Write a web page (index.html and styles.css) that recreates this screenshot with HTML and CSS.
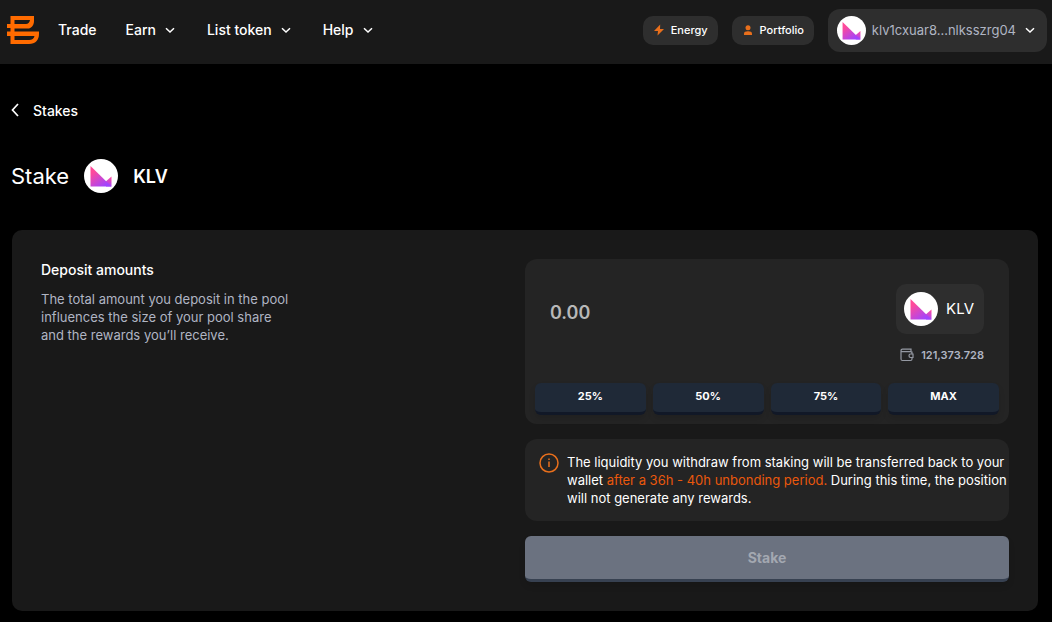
FILE: index.html
```html
<!DOCTYPE html>
<html lang="en">
<head>
    <meta charset="UTF-8">
    <meta name="viewport" content="width=device-width, initial-scale=1.0">
    <title>Stake KLV</title>
    <link rel="stylesheet" href="styles.css">
</head>
<body>
    <!-- shared icons -->
    <svg class="sprite" aria-hidden="true">
        <defs>
            <linearGradient id="klv-gradient" gradientUnits="userSpaceOnUse" x1="9" y1="13" x2="20" y2="28">
                <stop offset="0" stop-color="#ff4a9a"/>
                <stop offset="1" stop-color="#a044ff"/>
            </linearGradient>
            <linearGradient id="klv-tip" gradientUnits="userSpaceOnUse" x1="27" y1="18" x2="24" y2="28">
                <stop offset="0" stop-color="#ff4a9d"/>
                <stop offset="1" stop-color="#a044ff"/>
            </linearGradient>
        </defs>
        <symbol id="klv" viewBox="0 0 34 34">
            <circle cx="17" cy="17" r="17" fill="#fff"/>
            <path d="M22 22.300L27.500 17.500V27.500H22Z" fill="url(#klv-tip)"/>
            <path d="M6.500 7L27.500 27.500H6.500Z" fill="url(#klv-gradient)"/>
        </symbol>
        <symbol id="chevron" viewBox="0 0 16 16">
            <path d="M4 6.200L8 10L12 6.200" fill="none" stroke="#fff" stroke-width="1.500"/>
        </symbol>
    </svg>

    <header class="header">
        <a href="#" class="logo" aria-label="Home">
            <svg width="32" height="28" viewBox="0 0 32 28">
                <path fill="#ff6b00" fill-rule="evenodd" d="M3.500 0H27V5C27 8 25.500 11.500 22 12.500H7.500V15.500H32V18C32 24 28.500 28 22 28H3.500V20H0V15.500H3.500V12H0V8H3.500Z M7.500 4V8H19C21 8 22.500 6.500 23 4Z M7.500 20V24H22C25 24 27 22.500 27.500 20Z"/>
            </svg>
        </a>
        <nav class="nav">
            <a href="#">Trade</a>
            <a href="#">Earn <svg class="chevron"><use href="#chevron"/></svg></a>
            <a href="#">List token <svg class="chevron"><use href="#chevron"/></svg></a>
            <a href="#">Help <svg class="chevron"><use href="#chevron"/></svg></a>
        </nav>
        <div class="header-actions">
            <button class="pill">
                <svg width="12" height="12" viewBox="0 0 12 12"><path d="M7.200 0.500L1 7H5L4.500 11.500L11 5H7Z" fill="#e86f1c"/></svg>
                Energy
            </button>
            <button class="pill">
                <svg width="12" height="12" viewBox="0 0 12 12"><circle cx="6" cy="3.800" r="2.500" fill="#e86f1c"/><path d="M2 11V9.500C2 8 3.500 7.200 6 7.200S10 8 10 9.500V11Z" fill="#e86f1c"/></svg>
                Portfolio
            </button>
            <button class="account">
                <svg class="account-avatar"><use href="#klv"/></svg>
                klv1cxuar8...nlksszrg04
                <svg class="chevron"><use href="#chevron"/></svg>
            </button>
        </div>
    </header>

    <main>
        <a href="#" class="back-link">
            <svg width="8" height="14" viewBox="0 0 8 14"><path d="M7 1L1.500 7L7 13" fill="none" stroke="#fff" stroke-width="1.700"/></svg>
            Stakes
        </a>

        <div class="title">
            <h1>Stake</h1>
            <svg class="token-icon"><use href="#klv"/></svg>
            <h2>KLV</h2>
        </div>

        <section class="stake-card">
            <div class="stake-info">
                <h3><label for="amount">Deposit amounts</label></h3>
                <p>The total amount you deposit in the pool influences the size of your pool share and the rewards you’ll receive.</p>
            </div>

            <form class="stake-form">
                <div class="amount-box">
                    <div class="amount-row">
                        <input type="text" id="amount" class="amount-input" placeholder="0.00">
                        <div class="amount-token">
                            <div class="token">
                                <svg class="token-icon"><use href="#klv"/></svg>
                                KLV
                            </div>
                            <div class="balance">
                                <svg width="14" height="14" viewBox="0 0 14 14" fill="none" stroke="#9599a3" stroke-width="1.200">
                                    <path d="M12 5V3.500M12 10V11C12 12 11.500 12.500 10.500 12.500H2.500C1.500 12.500 1 12 1 11V3C1 1.500 1.700 1.200 2.500 1.200H11V3.700M1 3.700H10.500C11.500 3.700 12 4.200 12 5V6"/>
                                    <path d="M13 6H10.500C8.500 6 8.500 9.500 10.500 9.500H13Z"/>
                                </svg>
                                121,373.728
                            </div>
                        </div>
                    </div>
                    <div class="percent-row">
                        <button type="button" class="percent-button">25%</button>
                        <button type="button" class="percent-button">50%</button>
                        <button type="button" class="percent-button">75%</button>
                        <button type="button" class="percent-button">MAX</button>
                    </div>
                </div>

                <div class="notice">
                    <svg width="20" height="20" viewBox="0 0 20 20">
                        <circle cx="10" cy="10" r="9" fill="none" stroke="#e86f1c" stroke-width="1.500"/>
                        <path d="M10 8.500V14M10 5.500V7" stroke="#e86f1c" stroke-width="1.500"/>
                    </svg>
                    <p>The liquidity you withdraw from staking will be transferred back to your wallet <span>after a 36h - 40h unbonding period.</span> During this time, the position will not generate any rewards.</p>
                </div>

                <button type="submit" class="stake-button" disabled>Stake</button>
            </form>
        </section>
    </main>
</body>
</html>
```

FILE: styles.css
```css
* {
    margin: 0;
    padding: 0;
    box-sizing: border-box;
}

body {
    font-family: Inter, sans-serif;
    background-color: #000;
    color: #fff;
}

a {
    color: inherit;
    text-decoration: none;
}

button,
input {
    font-family: inherit;
    border: none;
}

button {
    color: #fff;
    cursor: pointer;
}

svg {
    flex-shrink: 0;
}

.sprite {
    position: absolute;
    width: 0;
    height: 0;
}

.chevron {
    width: 16px;
    height: 16px;
}

.token-icon {
    width: 34px;
    height: 34px;
}

/* Header */
.header {
    display: flex;
    align-items: center;
    height: 64px;
    padding: 0 5px 4px 7px;
    background-color: #191919;
}

.logo {
    display: flex;
}

.nav {
    display: flex;
    gap: 29px;
    margin-left: 19px;
    font-size: 14px;
    font-weight: 500;
    line-height: 18px;
}

.nav a {
    display: flex;
    align-items: center;
    gap: 6px;
}

.header-actions {
    display: flex;
    align-items: center;
    gap: 14px;
    margin-left: auto;
}

.pill {
    display: flex;
    align-items: center;
    gap: 6px;
    height: 29px;
    padding: 0 10px;
    border-radius: 10px;
    background-color: #2e2e2e;
    font-size: 11px;
    font-weight: 500;
}

.account {
    display: flex;
    align-items: center;
    gap: 6px;
    height: 43px;
    padding: 0 9px;
    border-radius: 12px;
    background-color: #2e2e2e;
    color: #b0b5c3;
    font-size: 13px;
}

.account-avatar {
    width: 29px;
    height: 29px;
}

/* Page */
main {
    padding: 36px 14px 12px 11px;
}

.back-link {
    display: inline-flex;
    align-items: center;
    gap: 14px;
    height: 20px;
    font-size: 14px;
    font-weight: 500;
}

.title {
    display: flex;
    align-items: center;
    gap: 15px;
    margin: 38px 0 37px;
}

.title h1 {
    font-size: 22px;
    font-weight: 400;
}

.title h2 {
    font-size: 18px;
    font-weight: 600;
}

.stake-card {
    display: grid;
    grid-template-columns: 1fr 1fr;
    margin-left: 1px;
    padding: 29px;
    border-radius: 10px;
    background-color: #191919;
}

.stake-info h3 {
    margin-bottom: 9px;
    font-size: 14px;
    font-weight: 500;
    line-height: 22px;
}

.stake-info p {
    max-width: 250px;
    color: #b0b5c3;
    font-size: 13px;
    line-height: 18px;
}

.stake-form {
    display: flex;
    flex-direction: column;
    gap: 15px;
}

.amount-box {
    padding: 25px 10px 9px;
    border-radius: 12px;
    background-color: #242424;
}

.amount-row {
    display: flex;
    align-items: flex-start;
    gap: 15px;
    padding: 0 15px;
}

.amount-input {
    flex: 1;
    min-width: 0;
    height: 56px;
    background: none;
    color: #fff;
    font-size: 18px;
    font-weight: 600;
    outline: none;
}

.amount-input::placeholder {
    color: #b8b8b8;
}

.amount-token {
    display: flex;
    flex-direction: column;
    align-items: flex-end;
    gap: 13px;
}

.token {
    display: flex;
    align-items: center;
    gap: 8px;
    padding: 8px 10px 8px 8px;
    border-radius: 10px;
    background-color: #2e2e2e;
    font-size: 15px;
    line-height: 18px;
}

.balance {
    display: flex;
    align-items: center;
    gap: 7px;
    color: #b0b5c3;
    font-size: 11px;
    font-weight: 600;
    line-height: 16px;
}

.percent-row {
    display: grid;
    grid-template-columns: repeat(4, 1fr);
    gap: 7px;
    margin-top: 20px;
}

.percent-button {
    height: 32px;
    padding-bottom: 3px;
    border-bottom: 3px solid #111827;
    border-radius: 6px;
    background-color: #1f2937;
    font-size: 11px;
    font-weight: 700;
    box-shadow: 0 4px 6px rgba(0, 0, 0, 0.1);
}

.notice {
    display: flex;
    gap: 8px;
    padding: 14px 2px 14px 14px;
    border-radius: 12px;
    background-color: #242424;
    font-size: 13px;
    line-height: 18px;
}

.notice span {
    color: #ea580c;
}

.stake-button {
    height: 46px;
    border-bottom: 3px solid #374151;
    border-radius: 6px;
    background-color: #6b7280;
    color: #a3a8b1;
    font-size: 14px;
    font-weight: 700;
    box-shadow: 0 4px 6px rgba(0, 0, 0, 0.1);
}
```
